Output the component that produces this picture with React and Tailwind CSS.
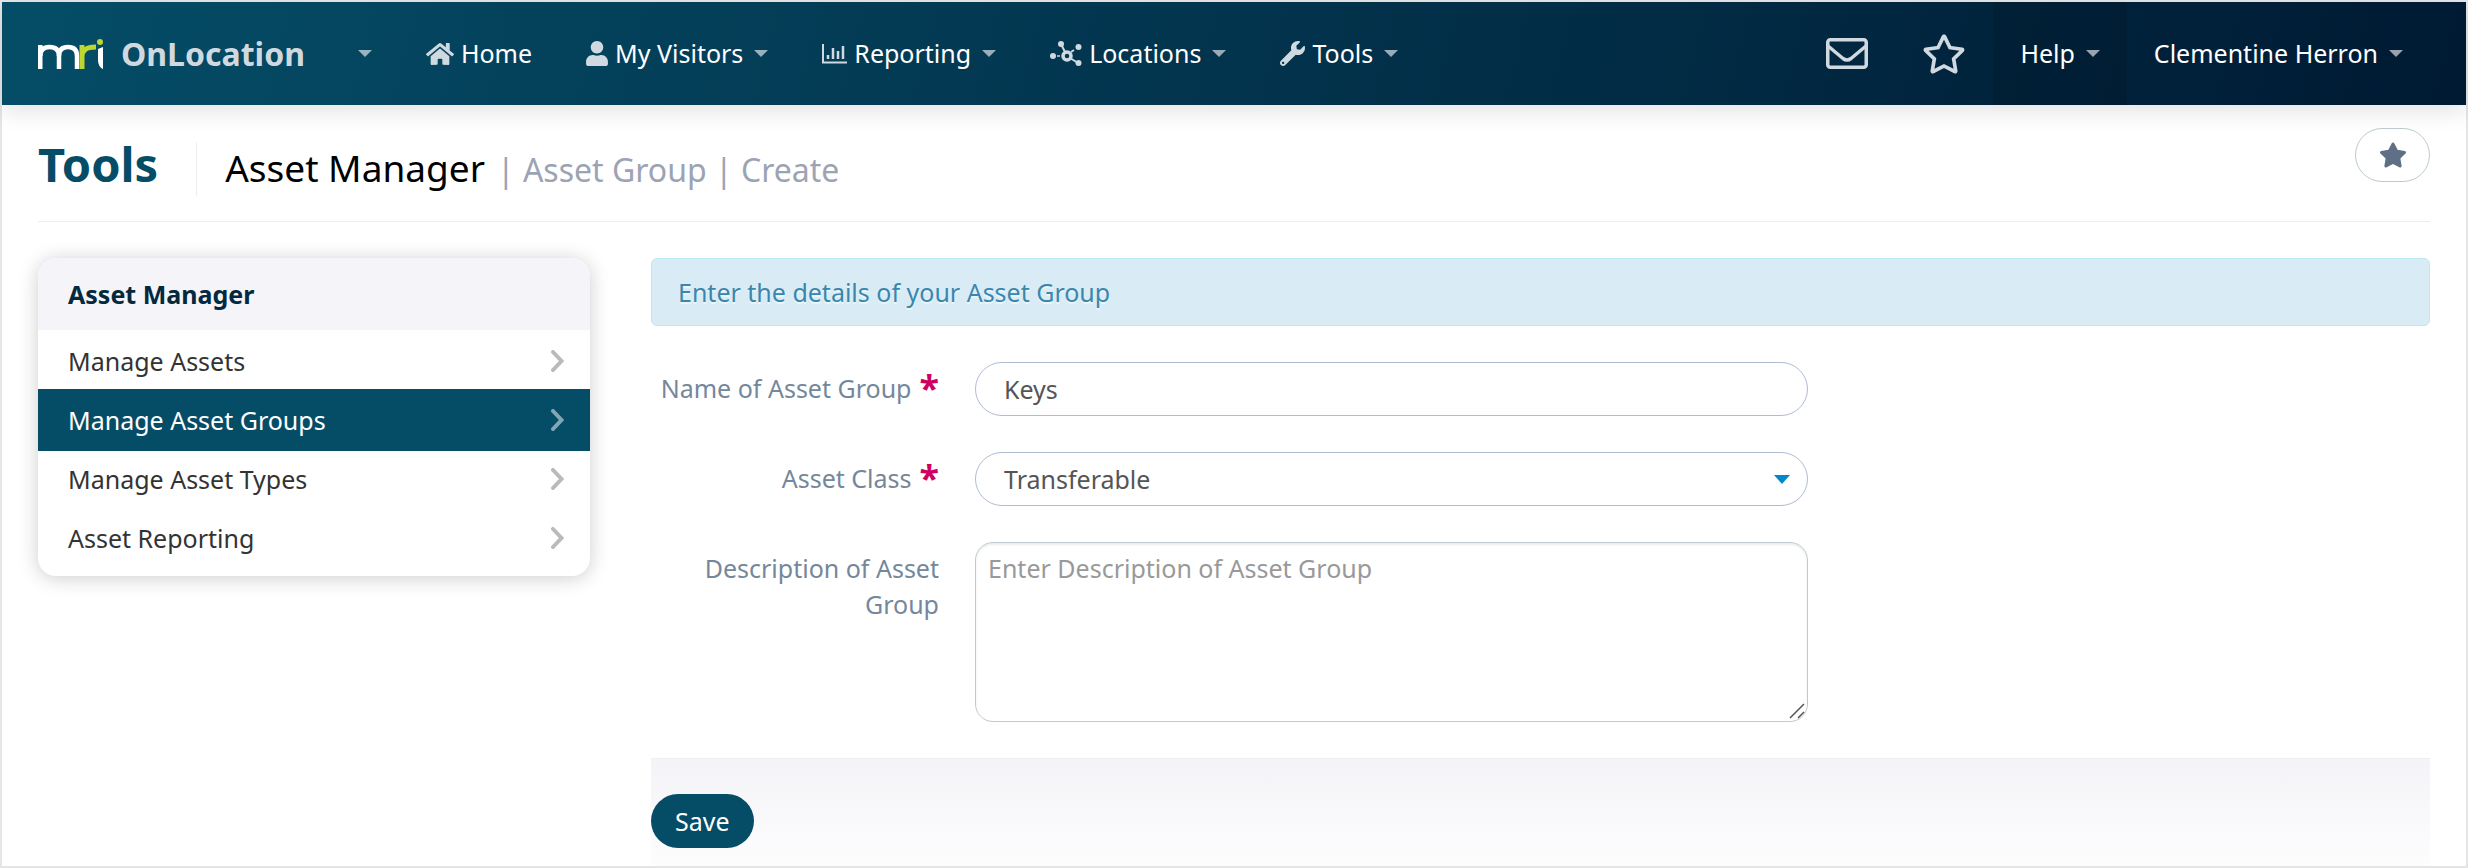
import React, { useState } from 'react'
import { FaHome, FaUser, FaWrench, FaRegStar, FaStar } from 'react-icons/fa'

const sideLinks = ['Manage Assets', 'Manage Asset Groups', 'Manage Asset Types', 'Asset Reporting']

const Caret = () => (
  <svg viewBox="0 0 14 7" className="w-[14px] h-[7px] fill-white/60" aria-hidden="true">
    <path d="M0 0h14L7 7z" />
  </svg>
)

const MriLogo = () => (
  <svg viewBox="0 0 65 30" className="w-[65px] h-[30px]" fill="none" role="img" aria-label="MRI">
    <g stroke="#fff" strokeWidth="4.500">
      <path d="M2.250 30V6" />
      <path d="M2.250 17C2.250 11 5 8 11.500 8s9.500 3 9.500 9v13" />
      <path d="M21 17C21 11 24 8 30 8s9 3 9 9v13" />
    </g>
    <path d="M44 30V6M44 18c0-7 4-10 14-10" stroke="#bed62f" strokeWidth="5" />
    <path d="M60 10l5-2v22c-3-1-5-5-5-9z" fill="#fff" />
    <circle cx="62" cy="3" r="3" fill="#bed62f" />
  </svg>
)

const ChartIcon = () => (
  <svg viewBox="0 0 25 20" className="w-[25px] h-5" fill="none" stroke="currentColor" strokeWidth="2" aria-hidden="true">
    <path d="M1 0v18.500h24" />
    <path d="M6 15v-4M11 15V4M16 15V7M21 15V2" strokeWidth="2.500" />
  </svg>
)

const HubIcon = () => (
  <svg viewBox="0 0 32 25" className="w-8 h-[25px]" fill="none" stroke="currentColor" aria-hidden="true">
    <g fill="currentColor" stroke="none">
      <circle cx="3" cy="15" r="3" />
      <circle cx="11" cy="3" r="3" />
      <circle cx="28.500" cy="6" r="3" />
      <circle cx="28.500" cy="22" r="3" />
    </g>
    <circle cx="17" cy="15" r="4" strokeWidth="3.500" />
    <path d="M11 3l4 8M20 17l8 5M24 9l-3 2" strokeWidth="2" />
    <path d="M7 15h3" strokeWidth="1.500" />
  </svg>
)

const EnvelopeIcon = () => (
  <svg viewBox="0 0 42 31" className="w-[42px] h-[31px]" fill="none" stroke="currentColor" strokeWidth="3.500" strokeLinejoin="round" aria-hidden="true">
    <rect x="1.750" y="1.750" width="38.500" height="27.500" rx="2.500" />
    <path d="M2 8l15 12.500q4 3 8 0L40 8" />
  </svg>
)

const NavItem = ({ icon, label, caret = true }) => (
  <a href="#" className="flex h-full items-center px-[27px] text-white">
    {icon && <span className="mr-[7px] text-[#d0d9df]">{icon}</span>}
    <span className="pb-0.5">{label}</span>
    {caret && <span className="ml-[11px]"><Caret /></span>}
  </a>
)

const FieldLabel = ({ htmlFor, required, children }) => (
  <label htmlFor={htmlFor} className="flex w-72 shrink-0 justify-end pt-2 text-right text-[#74879b]">
    <span>{children}</span>
    {required && <span className="ml-2 text-4xl leading-9 font-bold text-[#d0005f]">*</span>}
  </label>
)

const CreateAssetGroup = () => {
  const [name, setName] = useState('Keys')
  const [assetClass, setAssetClass] = useState('Transferable')
  const [description, setDescription] = useState('')

  return (
    <div className="min-h-screen border-2 border-[#e5e5e5] bg-white font-['Noto_Sans',sans-serif] text-[25px] leading-9">
      <header className="flex h-[103px] items-center justify-between bg-linear-[105deg,#054d67,#001a33] shadow-[0_8px_20px_rgba(0,0,0,0.1)]">
        <nav className="flex h-full items-center pl-9">
          <a href="#" className="flex items-center gap-[18px]">
            <MriLogo />
            <span className="text-[32px] font-bold text-[#d0d9df]">OnLocation</span>
          </a>
          <button type="button" aria-label="Switch product" className="ml-[26px] px-[27px]">
            <Caret />
          </button>
          <NavItem icon={<FaHome className="size-7" />} label="Home" caret={false} />
          <NavItem icon={<FaUser className="h-[25px] w-[22px]" />} label="My Visitors" />
          <NavItem icon={<ChartIcon />} label="Reporting" />
          <NavItem icon={<HubIcon />} label="Locations" />
          <NavItem icon={<FaWrench className="size-[25px]" />} label="Tools" />
        </nav>
        <div className="flex h-full items-center pr-9">
          <a href="#" aria-label="Messages" className="px-[27px] text-[#d0d9df]"><EnvelopeIcon /></a>
          <a href="#" aria-label="Favourites" className="px-[27px] text-[#d0d9df]"><FaRegStar className="size-[44px]" /></a>
          <div className="h-full bg-black/10">
            <NavItem label="Help" />
          </div>
          <NavItem label="Clementine Herron" />
        </div>
      </header>

      <div className="px-9">
        <div className="flex h-[117px] items-start justify-between border-b border-[#eee] pt-[23px]">
          <div className="flex items-baseline pt-[10px]">
            <h1 className="text-[47px] leading-[52px] font-bold text-[#054d67]">Tools</h1>
            <h2 className="ml-[38px] flex items-baseline border-l border-[#eee] pl-7 text-[37px] leading-[52px] text-black">
              Asset Manager
              <span className="ml-3 text-[32px] text-[#9ca3b3]">| Asset Group | Create</span>
            </h2>
          </div>
          <button type="button" aria-label="Add to favourites" className="flex h-[54px] w-[75px] items-center justify-center rounded-full border border-[#bccbce] text-[#5e6f86]">
            <FaStar className="size-7" />
          </button>
        </div>

        <div className="flex items-start gap-[61px] pt-9">
          <aside className="w-3/13 shrink-0 overflow-hidden rounded-[18px] bg-white pb-[10px] shadow-[0_2px_20px_rgba(0,0,0,0.2)]">
            <h3 className="bg-[#f4f4f9] px-[30px] py-[18px] font-bold text-[#03293f]">Asset Manager</h3>
            <ul>
              {sideLinks.map((link) => (
                <li key={link} className="h-[59px]">
                  <a
                    href="#"
                    className={link === 'Manage Asset Groups'
                      ? 'flex h-[62px] items-center justify-between bg-[#054d67] pr-[26px] pl-[30px] text-white'
                      : 'flex h-[62px] items-center justify-between pr-[26px] pl-[30px] text-[#333]'}
                  >
                    {link}
                    <svg viewBox="0 0 13 22" className="h-[22px] w-[13px] opacity-50" fill="none" stroke={link === 'Manage Asset Groups' ? '#fff' : '#777'} strokeWidth="4" strokeLinecap="round" aria-hidden="true">
                      <path d="M2 2l8.500 9L2 20" />
                    </svg>
                  </a>
                </li>
              ))}
            </ul>
          </aside>

          <main className="flex-1">
            <div className="rounded-md border border-[#bce8f1] bg-[#d9ecf6] px-[26px] py-[15px] text-[#3a87ad] text-shadow-[0_2px_0_rgba(255,255,255,0.5)]">
              Enter the details of your Asset Group
            </div>

            <form className="pt-9" onSubmit={(e) => e.preventDefault()}>
              <div className="mb-9 flex gap-9">
                <FieldLabel htmlFor="name" required>Name of Asset Group</FieldLabel>
                <input
                  id="name"
                  type="text"
                  value={name}
                  onChange={(e) => setName(e.target.value)}
                  className="h-[54px] max-w-[833px] flex-1 rounded-full border border-[#b0bcd4] px-7 text-[#555]"
                />
              </div>

              <div className="mb-9 flex gap-9">
                <FieldLabel htmlFor="asset-class" required>Asset Class</FieldLabel>
                <div className="relative max-w-[833px] flex-1">
                  <select
                    id="asset-class"
                    value={assetClass}
                    onChange={(e) => setAssetClass(e.target.value)}
                    className="block h-[54px] w-full appearance-none rounded-full border border-[#b0bcd4] px-7 text-[#555]"
                  >
                    <option>Transferable</option>
                    <option>Consumable</option>
                  </select>
                  <svg viewBox="0 0 16 9" className="pointer-events-none absolute top-[23px] right-[18px] h-[9px] w-4 fill-[#0088cc]" aria-hidden="true">
                    <path d="M0 0h16L8 9z" />
                  </svg>
                </div>
              </div>

              <div className="flex gap-9">
                <FieldLabel htmlFor="description">Description of Asset Group</FieldLabel>
                <div className="relative max-w-[833px] flex-1">
                  <textarea
                    id="description"
                    value={description}
                    onChange={(e) => setDescription(e.target.value)}
                    placeholder="Enter Description of Asset Group"
                    className="block h-[180px] w-full resize-none rounded-[18px] border border-[#bccbce] px-3 py-[7px] text-[#555] shadow-[inset_0_2px_2px_rgba(0,0,0,0.075)] placeholder:text-[#999]"
                  />
                  <svg viewBox="0 0 16 16" className="pointer-events-none absolute right-[3px] bottom-[3px] size-4" stroke="#555" strokeWidth="1.500" aria-hidden="true">
                    <path d="M1 15L15 1M9 15l6-6" />
                  </svg>
                </div>
              </div>

              <div className="mt-9 border-t border-[#eee] bg-linear-to-b from-[#f4f4f8] to-[#fdfdfe] pt-[35px] pb-[18px]">
                <button type="submit" className="block h-[54px] rounded-full bg-[#054d67] px-6 text-white">
                  Save
                </button>
              </div>
            </form>
          </main>
        </div>
      </div>
    </div>
  )
}

export default CreateAssetGroup
